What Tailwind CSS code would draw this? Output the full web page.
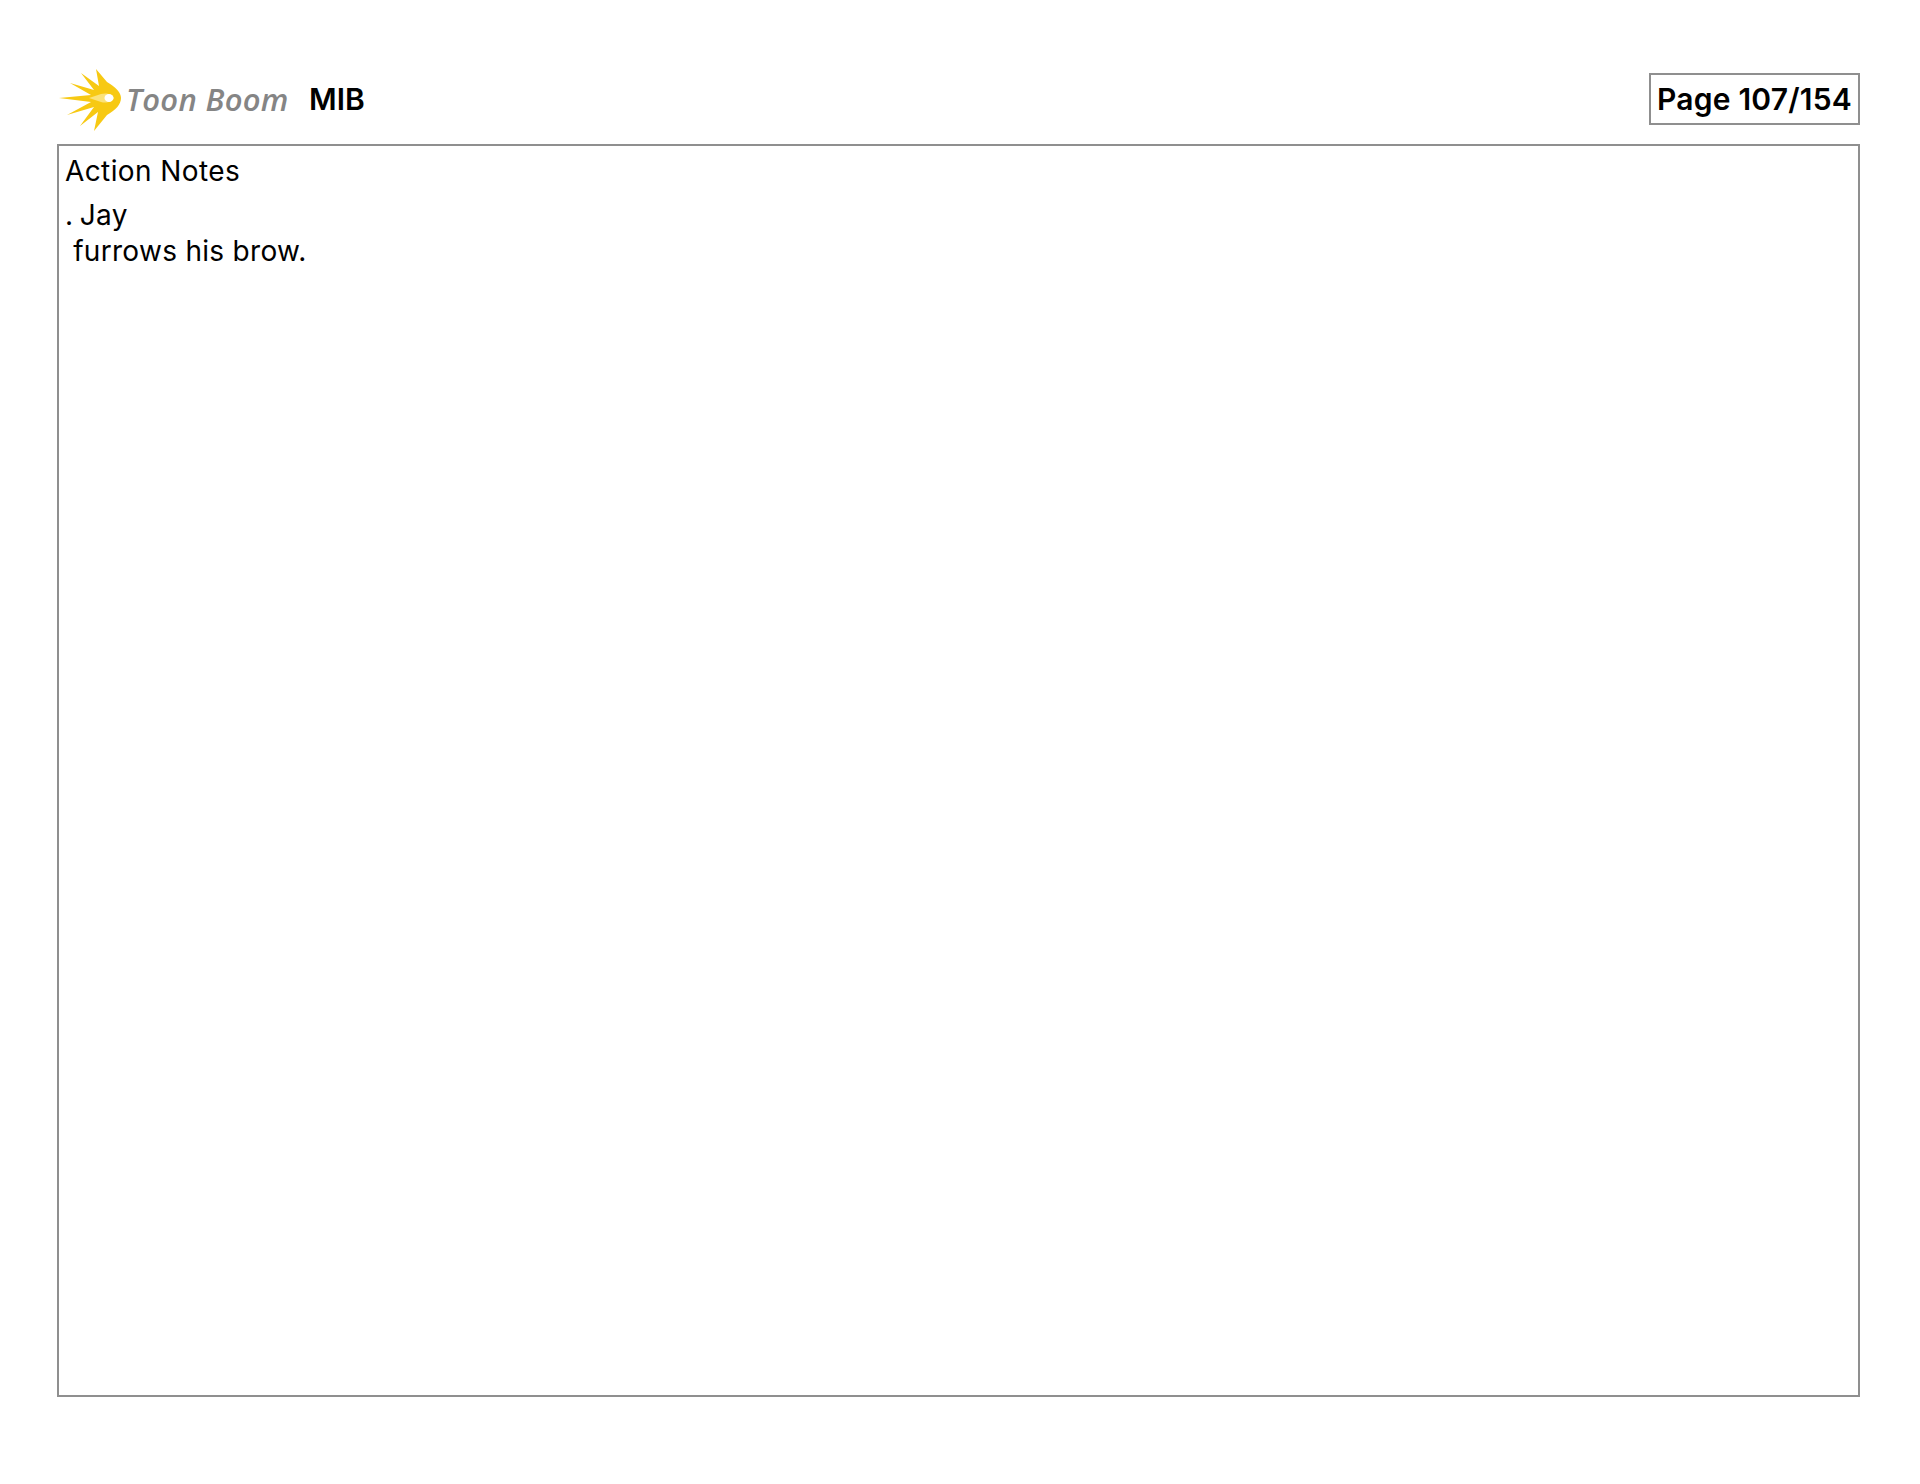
<!DOCTYPE html>
<html lang="en">
<head>
    <meta charset="UTF-8">
    <title>MIB - Page 107/154</title>
    <script src="https://cdn.jsdelivr.net/npm/@tailwindcss/browser@4"></script>
</head>
<body class="bg-white text-black font-['Inter',sans-serif]">
    <div class="pt-[73px] pl-[57px] pr-[60px]">
        <!-- Header -->
        <div class="flex items-center justify-between h-[52px]">
            <div class="flex items-center">
                <svg class="w-[80px] h-[72px] -ml-[2px] -mt-[11px] -mb-[9px] shrink-0" viewBox="0 0 80 72">
                    <path fill="#f7c913" d="M4 36 L36 33 L15 21 L39 28 L26 11 L44 24 L41 7 L52 20 C61 25 66 31 66 36 C66 42 61 48 52 53 L39 69 L43 50 L25 64 L39 45 L12 53 L36 40 Z"/>
                    <path fill="#fbe27a" d="M34 36 L46 32 C50 31 56 31 59 36 C56 41 50 41 46 40 Z"/>
                    <ellipse fill="#ffffff" cx="54" cy="36" rx="4.5" ry="4"/>
                </svg>
                <span class="-ml-[9px] w-[183px] font-['Open_Sans',sans-serif] italic font-semibold text-[31px] tracking-[0.3px] leading-none text-[#858585] whitespace-nowrap">Toon Boom</span>
                <span class="text-[30px] font-semibold leading-none">MIB</span>
            </div>
            <div class="border-2 border-[#8f8f8f] h-[52px] w-[211px] flex items-center justify-center text-[30px] font-semibold tracking-[0.2px] whitespace-nowrap">Page 107/154</div>
        </div>

        <!-- Notes -->
        <div class="mt-[19px] h-[1253px] border-2 border-[#8f8f8f] pl-[6px] pt-[7px] text-[28px] tracking-[0.4px] leading-[36px]">
            <div class="mb-[8px]">Action Notes</div>
            <div class="[word-spacing:-2px]">. Jay</div>
            <div class="whitespace-pre tracking-[0.3px]"> furrows his brow.</div>
        </div>
    </div>
</body>
</html>
